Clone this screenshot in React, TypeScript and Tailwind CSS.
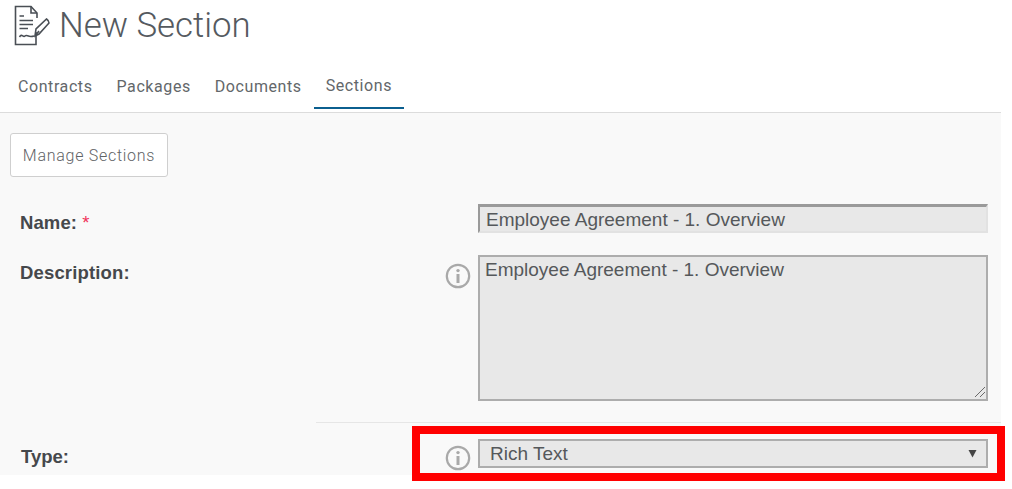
import React from "react";

function DocIcon() {
  return (
    <svg width="36" height="42" viewBox="0 0 36 42" fill="none" stroke="#4a4f55" strokeWidth="1.6" className="shrink-0">
      <path d="M22 27 V39.5 H1.5 V1.5 H17 L23 8 V13" />
      <path d="M17 1.5 V8 H23" />
      <path d="M5.5 11 H10 M5.5 15.5 H19 M5.5 19.5 H19 M5.5 23.5 H14" />
      <path d="M5.5 32 C8 28 9 33 11 31 C13 29 14 33 20 31" />
      <path d="M21 31 L22 24 L32.5 14 C34 15 35 16 35 18 L25 29 Z" />
      <path d="M21 31 L25 26" />
    </svg>
  );
}

function InfoIcon() {
  return (
    <svg width="26" height="26" viewBox="0 0 26 26" fill="none" className="shrink-0">
      <circle cx="13" cy="13" r="11.2" stroke="#a9a9a9" strokeWidth="2.2" />
      <circle cx="13" cy="7.6" r="1.7" fill="#a9a9a9" />
      <path d="M13 11 V20" stroke="#a9a9a9" strokeWidth="3" />
    </svg>
  );
}

const arial = "font-['Liberation_Sans',Arial,sans-serif]";

export default function App() {
  const tab = "h-[41px] px-3 flex items-center";
  return (
    <div className="relative w-[1012px] h-[489px] overflow-hidden bg-white font-['Roboto',sans-serif] text-[#63676a]">
      <div className="h-[50px] pl-[14px] pt-[5px] flex items-start gap-[10px]">
        <DocIcon />
        <h1 className="text-[34.8px] font-light leading-[40px] text-[#555a5f] -ml-px">New Section</h1>
      </div>
      <div className="w-[1001px] h-[63px] border-b border-[#dcdcdc] pl-[6px] pt-[16px] flex items-start text-[16px] tracking-[0.58px]">
        <span className={tab}>Contracts</span>
        <span className={tab}>Packages</span>
        <span className={tab}>Documents</span>
        <span className={`${tab} border-b-2 border-[#0b5f8f] h-[43px] pb-[2px]`}>Sections</span>
      </div>
      <div className="w-[1001px] h-[362px] bg-[#f9f9f9] pl-[10px] pt-[20px]">
        <button className="h-[44px] w-[158px] pt-[2px] bg-white border border-[#cfcfcf] rounded-[3px] text-[16px] font-light text-[#5f6366] tracking-[0.72px]">
          Manage Sections
        </button>
        <div className={`${arial} pt-[27px] pr-[13px]`}>
          <div className="flex h-[29px] items-center">
            <span className="ml-[10px] mt-[8px] text-[18.5px] tracking-[0.1px] font-bold text-[#45484c]">
              Name: <span className="text-[#f0325a] font-normal">*</span>
            </span>
            <div className="ml-auto w-[510px] h-[29px] bg-[#e8e8e8] border-t-[3px] border-l-[2px] border-r-[2px] border-b-[2px] border-t-[#9a9a9a] border-l-[#9a9a9a] border-r-[#e2e2e2] border-b-[#e2e2e2] pl-[6px] text-[19px] leading-[25px] text-[#55585b]">
              Employee Agreement - 1. Overview
            </div>
          </div>
          <div className="flex items-start mt-[22px]">
            <span className="ml-[10px] mt-[4px] text-[18.5px] tracking-[0.16px] font-bold text-[#45484c]">Description:</span>
            <div className="ml-auto mt-[8px] mr-[7px]">
              <InfoIcon />
            </div>
            <div className="relative w-[510px] h-[146px] bg-[#e8e8e8] border-2 border-[#adadad] pl-[5px] text-[19px] leading-[25px] text-[#55585b]">
              Employee Agreement - 1. Overview
              <svg width="12" height="12" viewBox="0 0 12 12" className="absolute right-0 bottom-[1px]" stroke="#6a6a6a" fill="none">
                <path d="M1 11 L11 1 M6 11 L11 6" />
              </svg>
            </div>
          </div>
          <div className="h-px mt-[21px] -mr-[13px] ml-[306px] bg-[#e6e6e6]" />
          <div className="flex items-start mt-[16px]">
            <span className="ml-[11px] mt-[4px] text-[18.5px] font-bold text-[#45484c]">Type:</span>
            <div className="ml-auto mt-[6px] mr-[7px]">
              <InfoIcon />
            </div>
            <div className="w-[510px] h-[29px] bg-[#e8e8e8] border-2 border-[#adadad] pl-[10px] pr-[9px] flex items-center justify-between text-[19px] text-[#55585b]">
              <span className="pt-[2px]">Rich Text</span>
              <svg width="9" height="9" viewBox="0 0 9 9" fill="#444"><path d="M0.5 1 H8.5 L4.5 8.5 Z" /></svg>
            </div>
          </div>
        </div>
      </div>
      <div className="absolute left-[412px] top-[426px] w-[593px] h-[55px] border-[8px] border-[#ff0000]" />
    </div>
  );
}
